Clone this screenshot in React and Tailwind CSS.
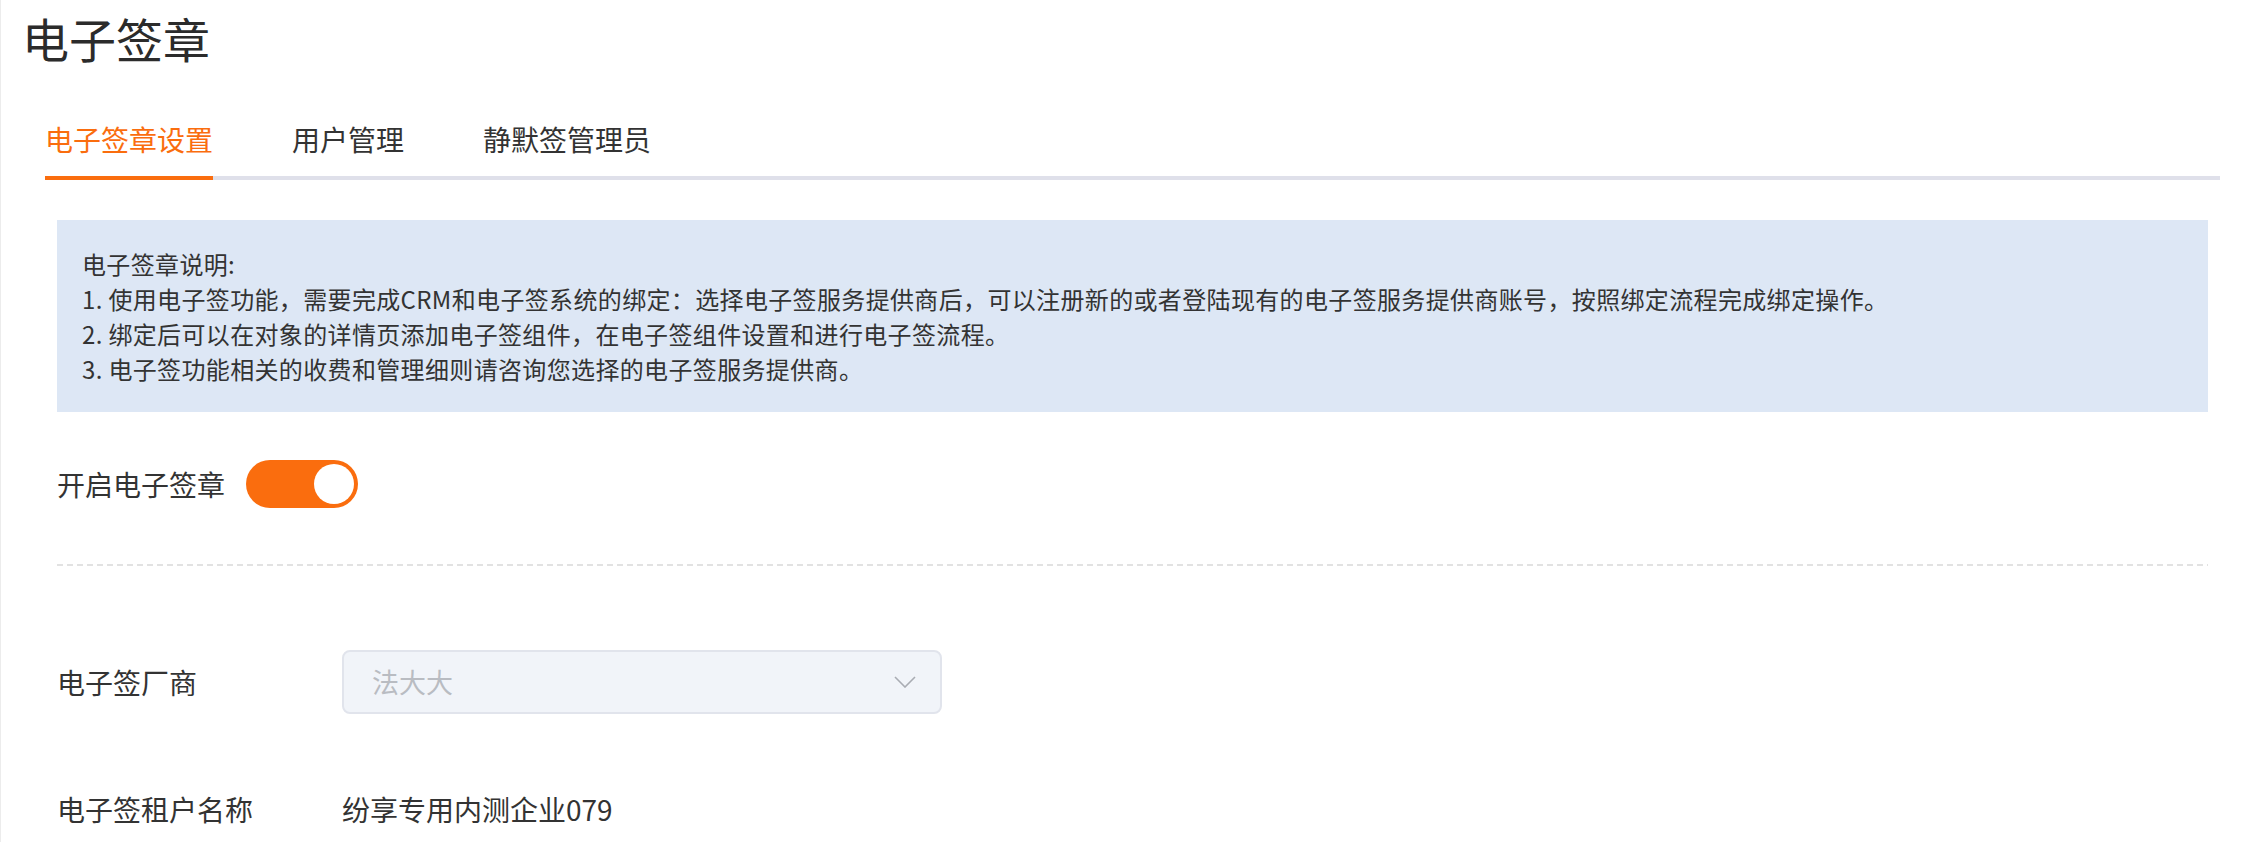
import { useState } from "react"

const TABS = ["电子签章设置", "用户管理", "静默签管理员"]

const NOTES = [
  "电子签章说明:",
  "1. 使用电子签功能，需要完成CRM和电子签系统的绑定：选择电子签服务提供商后，可以注册新的或者登陆现有的电子签服务提供商账号，按照绑定流程完成绑定操作。",
  "2. 绑定后可以在对象的详情页添加电子签组件，在电子签组件设置和进行电子签流程。",
  "3. 电子签功能相关的收费和管理细则请咨询您选择的电子签服务提供商。",
]

function Switch({ on, onChange }) {
  return (
    <button
      onClick={() => onChange(!on)}
      className={
        "flex h-[48px] w-[112px] shrink-0 items-center rounded-full p-[4px] " +
        (on ? "justify-end bg-[#fa6d0e]" : "justify-start bg-[#dcdfe6]")
      }
    >
      <span className="h-[40px] w-[40px] rounded-full bg-white" />
    </button>
  )
}

export default function App() {
  const [tab, setTab] = useState(0)
  const [enabled, setEnabled] = useState(true)

  return (
    <div className="min-h-screen border-l border-[#ececec] bg-white font-['Noto_Sans_CJK_SC','Noto_Sans',sans-serif] text-[#333]">
      <h1 className="pl-[21px] pt-[12px] text-[47px] leading-[52px] font-normal text-[#2b2b2b]">电子签章</h1>

      <div className="ml-[44px] mr-[30px] mt-[55px] flex border-b-4 border-[#dfe0ea]">
        {TABS.map((t, i) => (
          <button
            key={t}
            onClick={() => setTab(i)}
            className={
              "mr-[79px] -mb-[4px] border-b-4 pb-[17px] text-[28px] leading-[40px] " +
              (i === tab ? "border-[#fa6d0e] text-[#fa6d0e]" : "border-transparent text-[#333]")
            }
          >
            {t}
          </button>
        ))}
      </div>

      <div className="pl-[56px] pr-[42px]">
        <div className="mt-[40px] bg-[#dde7f5] px-[25px] py-[26px] text-[24px] leading-[35px] tracking-[0.35px] text-[#333]">
          {NOTES.map((n) => (
            <p key={n}>{n}</p>
          ))}
        </div>

        <div className="mt-[48px] flex items-center gap-[21px]">
          <span className="text-[28px] leading-[40px]">开启电子签章</span>
          <Switch on={enabled} onChange={setEnabled} />
        </div>

        <div className="mt-[56px] h-[2px] bg-[repeating-linear-gradient(to_right,#e2e2e2_0,#e2e2e2_6px,transparent_6px,transparent_10px)]" />

        <div className="mt-[84px] flex items-center">
          <span className="w-[285px] shrink-0 text-[28px] leading-[40px]">电子签厂商</span>
          <div className="flex h-[64px] w-[600px] items-center justify-between rounded-[8px] border-2 border-[#e1e4ec] bg-[#f1f4f9] pl-[28px] pr-[24px]">
            <span className="text-[27px] text-[#b9bcc2]">法大大</span>
            <svg width="22" height="12" viewBox="0 0 22 12" fill="none">
              <path d="M1 1l10 10L21 1" stroke="#a9acb3" strokeWidth="1.6" />
            </svg>
          </div>
        </div>

        <div className="mt-[75px] flex items-center">
          <span className="w-[285px] shrink-0 text-[28px] leading-[40px]">电子签租户名称</span>
          <span className="text-[28px] leading-[40px]">纷享专用内测企业079</span>
        </div>
      </div>
    </div>
  )
}
